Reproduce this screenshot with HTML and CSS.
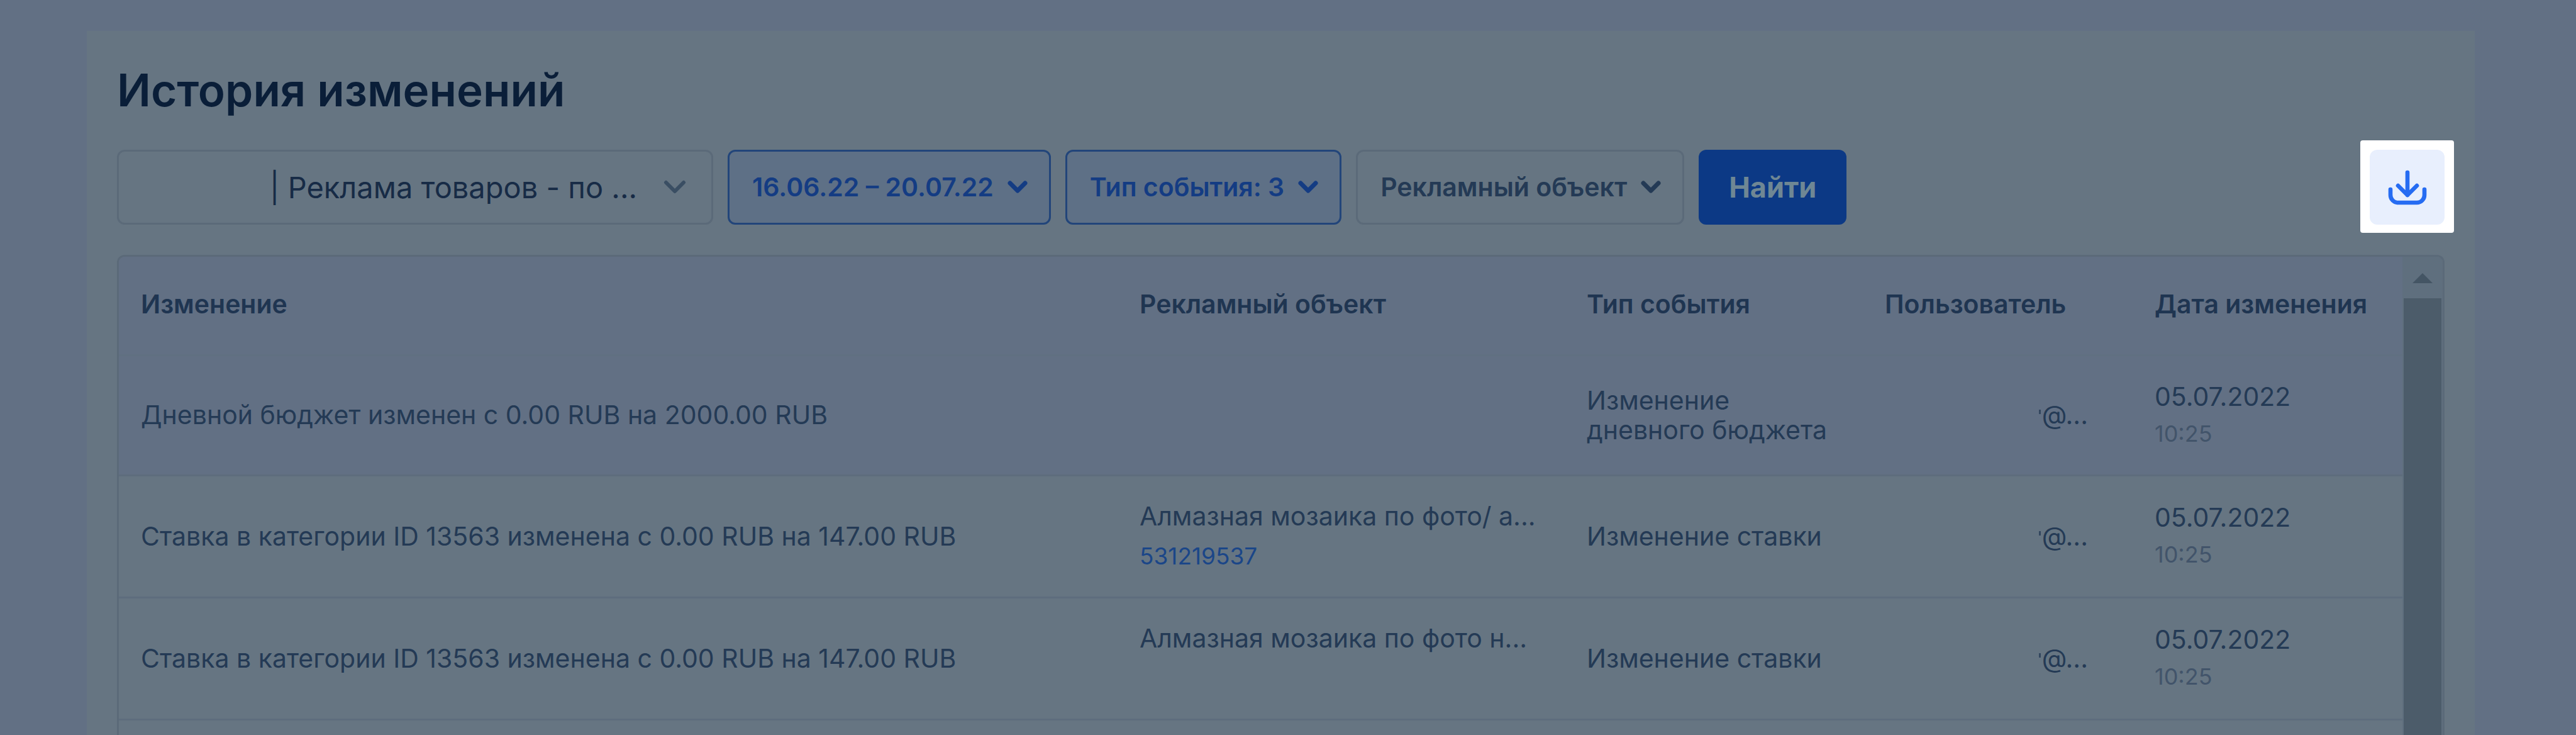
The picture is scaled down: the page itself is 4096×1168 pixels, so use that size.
FILE: index.html
```
<!DOCTYPE html>
<html lang="ru">
<head>
    <meta charset="UTF-8">
    <meta name="viewport" content="width=device-width, initial-scale=1.0">
    <title>История изменений</title>
    <link rel="stylesheet" href="styles.css">
</head>
<body>
    <main class="card">
        <h1>История изменений</h1>

        <form class="filters">
            <button type="button" class="field campaign">
                <span class="campaign-name">| Реклама товаров - по ...</span>
                <svg class="chevron" viewBox="0 0 36 24"><path d="M4 4l14 14L32 4"/></svg>
            </button>
            <button type="button" class="field active">
                16.06.22 – 20.07.22
                <svg class="chevron small" viewBox="0 0 32 24"><path d="M4 5l12 12L28 5"/></svg>
            </button>
            <button type="button" class="field active">
                Тип события: 3
                <svg class="chevron small" viewBox="0 0 32 24"><path d="M4 5l12 12L28 5"/></svg>
            </button>
            <button type="button" class="field">
                Рекламный объект
                <svg class="chevron small" viewBox="0 0 32 24"><path d="M4 5l12 12L28 5"/></svg>
            </button>
            <button type="submit" class="search">Найти</button>
            <div class="highlight">
                <button type="button" class="download" aria-label="Скачать">
                    <svg viewBox="0 0 24 24"><path d="M12 4v12M7 11l5 5 5-5M3 13v3a4 4 0 0 0 4 4h10a4 4 0 0 0 4-4v-3"/></svg>
                </button>
            </div>
        </form>

        <div class="history">
            <table>
                <colgroup>
                    <col>
                    <col class="col-object">
                    <col class="col-type">
                    <col class="col-user">
                    <col class="col-date">
                </colgroup>
                <thead>
                    <tr>
                        <th>Изменение</th>
                        <th>Рекламный объект</th>
                        <th>Тип события</th>
                        <th>Пользователь</th>
                        <th>Дата изменения</th>
                    </tr>
                </thead>
                <tbody>
                    <tr class="selected">
                        <td>Дневной бюджет изменен с 0.00 RUB на 2000.00 RUB</td>
                        <td></td>
                        <td>Изменение<br>дневного бюджета</td>
                        <td class="user">@...</td>
                        <td>05.07.2022<span class="time">10:25</span></td>
                    </tr>
                    <tr>
                        <td>Ставка в категории ID 13563 изменена с 0.00 RUB на 147.00 RUB</td>
                        <td>Алмазная мозаика по фото/ а...<a class="object-id" href="#">531219537</a></td>
                        <td>Изменение ставки</td>
                        <td class="user">@...</td>
                        <td>05.07.2022<span class="time">10:25</span></td>
                    </tr>
                    <tr>
                        <td>Ставка в категории ID 13563 изменена с 0.00 RUB на 147.00 RUB</td>
                        <td>Алмазная мозаика по фото н...<span class="object-id"></span></td>
                        <td>Изменение ставки</td>
                        <td class="user">@...</td>
                        <td>05.07.2022<span class="time">10:25</span></td>
                    </tr>
                </tbody>
            </table>
            <div class="scrollbar">
                <svg class="scroll-up" viewBox="0 0 32 16"><path d="M16 0l16 16H0z"/></svg>
                <div class="thumb"></div>
            </div>
        </div>
    </main>
</body>
</html>
```
FILE: styles.css
```
:root {
    --page: #627084;
    --card: #667582;
    --border: #5b6a79;
    --line: #5e6d7d;
    --title: #0a1e38;
    --text: #243a55;
    --muted: #42546a;
    --blue: #143c83;
    --active: #5e7086;
}
* {
    box-sizing: border-box;
    margin: 0;
    padding: 0;
}
body {
    display: flex;
    flex-direction: column;
    height: 100vh;
    padding: 49px 161px 0 138px;
    font-family: Inter, sans-serif;
    font-size: 41px;
    line-height: 47px;
    background: var(--page);
    color: var(--text);
}
.card {
    display: flex;
    flex-direction: column;
    flex: 1;
    min-height: 0;
    padding: 48px 48px 0;
    background: var(--card);
}
h1 {
    font-size: 71px;
    line-height: 92px;
    font-weight: 600;
    color: var(--title);
    margin-bottom: 49px;
}
.filters {
    display: flex;
    gap: 23px;
    height: 119px;
    margin-bottom: 48px;
}
button {
    font: inherit;
    cursor: pointer;
}
.field {
    display: flex;
    align-items: center;
    gap: 22px;
    padding: 0 34px 0 36px;
    border: 3px solid var(--border);
    border-radius: 12px;
    background: transparent;
    color: var(--text);
    font-weight: 600;
    white-space: nowrap;
}
.field.active {
    background: var(--active);
    border-color: #22457a;
    color: var(--blue);
}
.campaign {
    width: 948px;
    justify-content: flex-end;
    gap: 42px;
    padding-right: 40px;
    font-size: 47px;
    font-weight: 400;
    color: #172b46;
}
.chevron {
    width: 36px;
    height: 24px;
    fill: none;
    stroke: #3a4e63;
    stroke-width: 6;
    stroke-linecap: round;
    stroke-linejoin: round;
}
.chevron.small {
    width: 32px;
    stroke: currentColor;
    stroke-width: 7;
}
.search {
    padding: 0 48px;
    border: none;
    border-radius: 12px;
    background: #0c3985;
    color: #6f8794;
    font-size: 45px;
    font-weight: 700;
}
/* white frame sticks out around the button */
.highlight {
    align-self: flex-start;
    margin: -15px -15px -15px auto;
    padding: 15px 15px 13px;
    border-radius: 4px;
    background: #fff;
}
.download {
    display: flex;
    align-items: center;
    justify-content: center;
    width: 119px;
    height: 119px;
    border: none;
    border-radius: 12px;
    background: #e8effd;
}
.download svg {
    width: 72px;
    height: 72px;
    fill: none;
    stroke: #266cf2;
    stroke-width: 2.2;
    stroke-linecap: round;
    stroke-linejoin: round;
}
.history {
    display: flex;
    flex: 1;
    min-height: 0;
    border: 3px solid var(--border);
    border-bottom: none;
    border-radius: 12px 12px 0 0;
    overflow: hidden;
}
table {
    flex: 1;
    align-self: flex-start;
    table-layout: fixed;
    border-collapse: collapse;
}
.col-object {
    width: 711px;
}
.col-type {
    width: 474px;
}
.col-user {
    width: 429px;
}
.col-date {
    width: 426px;
}
th, td {
    padding: 0 0 0 32px;
    text-align: left;
    vertical-align: middle;
    white-space: nowrap;
    border-bottom: 3px solid var(--line);
}
th:first-child, td:first-child {
    padding-left: 35px;
}
th {
    height: 156px;
    padding-bottom: 4px;
    font-weight: 600;
    color: #1f3551;
    background: var(--page);
    border-bottom-color: #607081;
}
td {
    height: 194px;
}
.selected td {
    height: 191px;
    background: var(--page);
}
td.user {
    padding-right: 74px;
    text-align: right;
}
/* edge of the hidden login */
td.user::before {
    content: "";
    display: inline-block;
    width: 3px;
    height: 7px;
    margin-right: 2px;
    vertical-align: 16px;
    background: #33475f;
}
.time, .object-id {
    display: block;
    height: 47px;
    margin-top: 12px;
    font-size: 36px;
}
.time {
    color: var(--muted);
}
.object-id {
    margin-top: 16px;
    font-size: 37px;
    color: #1b4688;
    text-decoration: none;
}
.scrollbar {
    display: flex;
    flex-direction: column;
    align-items: center;
    width: 64px;
    padding-top: 26px;
    background: #5f6f7e;
}
.scroll-up {
    width: 32px;
    height: 16px;
    margin-bottom: 24px;
    fill: #445564;
}
.thumb {
    width: 60px;
    flex: 1;
    background: #4c5c6a;
}
```
